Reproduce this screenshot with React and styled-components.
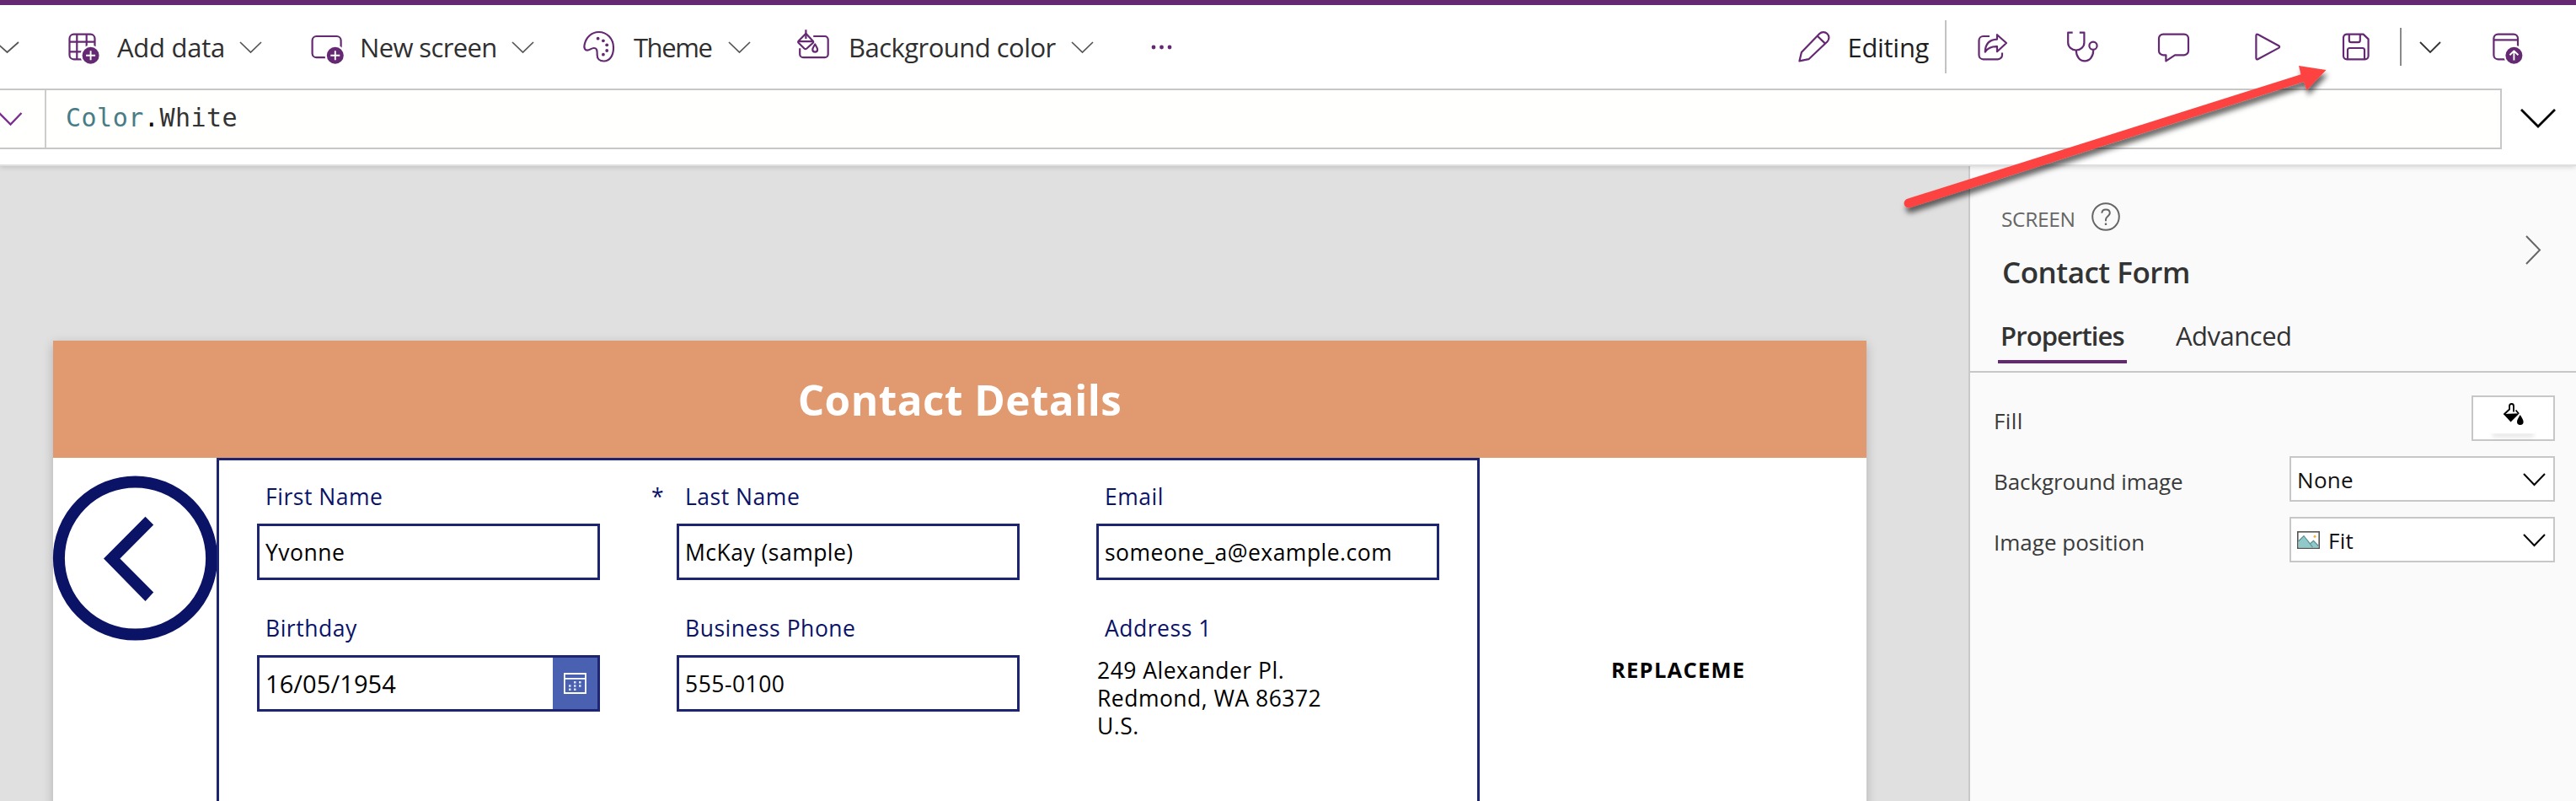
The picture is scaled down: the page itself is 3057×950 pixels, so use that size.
import React from "react";
import styled, { createGlobalStyle } from "styled-components";

const purple = "#652873";
const navy = "#0b1367";
const line = "#c7c7c7";

const GlobalStyle = createGlobalStyle`
  * { box-sizing: border-box; }
  html, body { margin: 0; padding: 0; }
  body { font-family: "Open Sans", "Noto Sans", sans-serif; overflow: hidden; }
  svg { display: block; flex: none; overflow: visible; }
`;

const Page = styled.div`
  position: relative;
  display: flex;
  flex-direction: column;
  width: 3057px;
  height: 950px;
  overflow: hidden;
  background: #e0e0e0;
`;

const TopArea = styled.header`
  position: relative;
  z-index: 1;
  flex: none;
  height: 197px;
  background: #fff;
  border-top: 6px solid ${purple};
  border-bottom: 2px solid #dfdfdf;
  box-shadow: 0 1px 6px rgba(0, 0, 0, 0.17);
`;

const Toolbar = styled.div`
  display: flex;
  align-items: center;
  justify-content: space-between;
  height: 99px;
`;

const Commands = styled.div`
  display: flex;
  align-items: center;
  gap: 57px;
  margin-left: -6px;
`;

const Command = styled.div`
  display: flex;
  align-items: center;
  gap: 19px;
`;

const CommandLabel = styled.span`
  width: ${(p) => p.$width}px;
  padding-left: ${(p) => p.$indent || 0}px;
  font-size: 31px;
  line-height: 44px;
  letter-spacing: ${(p) => p.$track}px;
  white-space: nowrap;
  color: ${(p) => p.$color || "#2f2f2f"};
`;

const More = styled.div`
  margin-left: 11px;
`;

const RightTools = styled.div`
  display: flex;
  align-items: center;
  padding-right: 60px;
`;

const Divider = styled.div`
  width: 2px;
  height: ${(p) => p.$height}px;
  margin: 0 ${(p) => p.$right}px 0 ${(p) => p.$left}px;
  background: ${(p) => p.$color};
`;

const IconGroup = styled.div`
  display: flex;
  gap: 68px;
`;

const PublishSlot = styled.div`
  margin-left: 60px;
`;

const FormulaRow = styled.div`
  display: flex;
  align-items: center;
  height: 72px;
`;

const FormulaBar = styled.div`
  display: flex;
  width: 2969px;
  height: 72px;
  border: 2px solid ${line};
  border-left: 0;
  background: #fffffd;
`;

const PropertyPicker = styled.div`
  display: flex;
  align-items: center;
  width: 55px;
  border-right: 2px solid #cdcdcd;
`;

const Formula = styled.code`
  padding: 0 0 0 23px;
  font: 30px/66px "DejaVu Sans Mono", monospace;
  letter-spacing: 0.5px;
  color: #333;
`;

const Enum = styled.span`
  color: #487c86;
`;

const Dot = styled.span`
  color: #000;
`;

const Expand = styled.div`
  margin: -3px 0 0 22px;
`;

const Work = styled.div`
  display: flex;
  flex: 1;
  min-height: 0;
`;

const Stage = styled.main`
  flex: 1;
  padding: 207px 0 0 63px;
  overflow: hidden;
`;

const Screen = styled.section`
  width: 2152px;
  height: 700px;
  background: #fff;
  box-shadow: 0 4px 12px rgba(0, 0, 0, 0.22);
`;

const ScreenTitle = styled.h1`
  margin: 0;
  height: 139px;
  padding-top: 1px;
  background: #e1996f;
  color: #fff;
  font-size: 49.5px;
  font-weight: 700;
  line-height: 138px;
  letter-spacing: 0.45px;
  text-align: center;
`;

const ScreenBody = styled.div`
  display: flex;
  height: 561px;
`;

const BackColumn = styled.div`
  width: 194px;
  padding-top: 21px;
`;

const Form = styled.div`
  display: grid;
  grid-template-columns: repeat(3, 498px);
  grid-auto-rows: 156px;
  align-content: start;
  width: 1499px;
  padding: 22px 0 0 45px;
  border: 3px solid #1d2472;
`;

const Field = styled.div`
  width: 407px;
`;

const FieldLabel = styled.div`
  display: flex;
  height: 40px;
  margin: 0 0 13px 10px;
  padding-top: 1px;
  font-size: 26.5px;
  line-height: 40px;
  letter-spacing: 0.52px;
  white-space: nowrap;
  color: ${navy};
`;

const Required = styled.span`
  width: 40px;
  margin-left: -40px;
`;

const TextBox = styled.div`
  display: flex;
  align-items: center;
  justify-content: space-between;
  height: 67px;
  padding-left: 7px;
  border: 3px solid #1d2472;
  font-size: ${(p) => p.$size || 26.5}px;
  letter-spacing: ${(p) => (p.$size ? 0.1 : 0.48)}px;
  white-space: nowrap;
  color: #000;
`;

const DateButton = styled.div`
  display: flex;
  align-items: center;
  justify-content: center;
  width: 53px;
  align-self: stretch;
  background: #4a60b0;
`;

const Address = styled.div`
  margin: -11px 0 0 1px;
  padding-top: 13px;
  font-size: 26.5px;
  line-height: 33px;
  letter-spacing: 0.48px;
  white-space: pre-line;
`;

const Placeholder = styled.div`
  padding: 231px 0 0 156px;
  font-size: 25.5px;
  font-weight: 700;
  line-height: 40px;
  letter-spacing: 1.25px;
  color: #000;
`;

const Panel = styled.aside`
  width: 721px;
  border-left: 2px solid #c9c9c9;
  background: #fafafa;
`;

const PanelHead = styled.div`
  display: flex;
  justify-content: space-between;
  height: 245px;
  padding: 43px 42px 0 33px;
  border-bottom: 2px solid ${line};
`;

const Kind = styled.div`
  display: flex;
  align-items: center;
  height: 34px;
  padding-left: 4px;
  gap: 19px;
`;

const KindText = styled.span`
  padding-top: 5px;
  font-size: 24.5px;
  line-height: 34px;
  letter-spacing: -0.35px;
  color: #666;
`;

const PanelTitle = styled.h2`
  margin: 27px 0 0 5px;
  font-size: 35px;
  font-weight: 600;
  line-height: 44px;
  letter-spacing: -0.49px;
  color: #333;
`;

const Tabs = styled.div`
  display: flex;
  gap: 58px;
  margin-top: 33px;
`;

const Tab = styled.div`
  height: 53px;
  width: ${(p) => (p.$active ? 153 : 140)}px;
  padding-left: ${(p) => (p.$active ? 3 : 0)}px;
  border-bottom: 4px solid ${(p) => (p.$active ? purple : "transparent")};
  font-size: 31px;
  font-weight: ${(p) => (p.$active ? 600 : 400)};
  line-height: 40px;
  letter-spacing: ${(p) => (p.$active ? -0.9 : -0.5)}px;
  white-space: nowrap;
  color: #333;
`;

const CollapseSlot = styled.div`
  padding-top: 39px;
`;

const Properties = styled.div`
  display: flex;
  flex-direction: column;
  gap: 18px;
  padding: 27px 25px 0 27px;
`;

const PropertyRow = styled.div`
  display: flex;
  align-items: center;
  justify-content: space-between;
  height: 54px;
`;

const PropertyName = styled.span`
  padding: 6px 0 0 1px;
  font-size: 26px;
  line-height: 36px;
  letter-spacing: ${(p) => p.$track || 0}px;
  color: #3a3a3a;
`;

const FillButton = styled.div`
  display: flex;
  flex-direction: column;
  align-items: center;
  width: 99px;
  height: 54px;
  padding-top: 7px;
  border: 2px solid ${line};
  background: #fff;
`;

const Swatch = styled.div`
  width: 51px;
  height: 6px;
  margin-top: 4px;
  background: #fff;
  box-shadow: 0 5px 5px -1px rgba(0, 0, 0, 0.13);
`;

const Select = styled.div`
  display: flex;
  align-items: center;
  width: 315px;
  height: 54px;
  padding: 1px 9px 0 7px;
  border: 2px solid ${line};
  background: #fff;
  font-size: 26px;
  letter-spacing: 0.3px;
  color: #111;
`;

const SelectText = styled.span`
  flex: 1;
  padding-left: ${(p) => (p.$afterIcon ? 10 : 0)}px;
  line-height: 36px;
`;

const Annotation = styled.svg`
  position: absolute;
  z-index: 2;
  left: 0;
  top: 0;
  pointer-events: none;
`;

const Chevron = ({ w = 27, h = 14, color = "#555", stroke = 1.7 }) => (
  <svg width={w} height={h} fill="none" stroke={color} strokeWidth={stroke}>
    <path d={`M1 1 L${w / 2} ${h - 1} L${w - 1} 1`} />
  </svg>
);

const Icon = ({ children, shift = 0 }) => (
  <svg width="40" height="40" viewBox="0 0 40 40" fill="none" stroke={purple} strokeWidth="2.2" strokeLinejoin="round">
    <g transform={`translate(${shift} 0)`}>{children}</g>
  </svg>
);

const PlusBadge = ({ x }) => (
  <g>
    <circle cx={x} cy="29.7" r="12.2" fill="#fff" stroke="none" />
    <circle cx={x} cy="29.7" r="10" fill={purple} stroke="none" />
    <path d={`M${x - 5.5} 29.7h11M${x} 24.2v11`} stroke="#fff" strokeWidth="1.9" />
  </g>
);

const AddDataIcon = () => (
  <Icon>
    <rect x="2.5" y="4.7" width="30" height="29.6" rx="5" />
    <path d="M11.3 4.7v29.6M22.7 4.7v29.6M2.5 13.7h30M2.5 25.3h30" />
    <PlusBadge x={27.6} />
  </Icon>
);

const NewScreenIcon = () => (
  <Icon>
    <rect x="2.6" y="7" width="34" height="25.2" rx="5" />
    <PlusBadge x={29.8} />
  </Icon>
);

const ThemeIcon = () => (
  <Icon>
    <path d="M2.6 17C4.4 8.5 11 2 19.5 2C29.5 2 37 10 37 20.5C37 29.5 33 36.5 25.5 36.5C20.5 36.5 17.7 33.5 17.7 29.5C17.7 24 17.6 21 13.8 21C10.5 21 9 23.7 6 23.7C3 23.7 1.8 20.6 2.6 17Z" />
    <g fill={purple} stroke="none">
      <circle cx="18.6" cy="9.7" r="1.9" />
      <circle cx="24.9" cy="12.3" r="1.9" />
      <circle cx="29.2" cy="17.3" r="1.9" />
      <circle cx="29.2" cy="24" r="1.9" />
      <circle cx="24.9" cy="28.7" r="1.9" />
    </g>
  </Icon>
);

const BackgroundIcon = () => (
  <Icon shift={-0.8}>
    <path d="M18 7h13.5a4 4 0 0 1 4 4v17.2a4 4 0 0 1-4 4H6a4 4 0 0 1-4-4v-7" />
    <path d="M9.2 3.7L17.4 12.4Q18.6 13.7 17.4 15L10.2 21.5Q8.6 22.8 7.2 21.5L.6 15Q-.6 13.7.6 12.4Z" />
    <path d="M9.2 -.7V10M0 13.2h18" />
    <path d="M20 16.5c-1.6 2.8-2.9 4.4-2.9 6.2a2.9 2.9 0 0 0 5.8 0c0-1.8-1.3-3.4-2.9-6.2z" />
  </Icon>
);

const PencilIcon = () => (
  <Icon shift={1}>
    <path d="M2.4 36.4L4.9 26L26.2 4.1A6.3 6.3 0 0 1 35.6 13.2L13.4 34.2Z" />
    <path d="M23.8 6.8L33 15.6" />
  </Icon>
);

const ShareIcon = () => (
  <Icon shift={1}>
    <path d="M16 7H8.5a5 5 0 0 0-5 5v17.3a5 5 0 0 0 5 5H26a5 5 0 0 0 5-5V26.5" />
    <path d="M25 5.2L36 15L25 25.2V19.2C18 19 14 21 10.8 25.6C11 16.5 15 11 25 10.6Z" />
  </Icon>
);

const CheckerIcon = () => (
  <Icon shift={-1}>
    <path d="M8.7 2.6H3.2V14.5a9.6 9 0 0 0 19.2 0V2.6H16.8" />
    <path d="M12.8 23.5C12.8 31 17 36.3 23 36.3S33.2 31 33.2 23.8" />
    <circle cx="33" cy="18.3" r="4.6" />
  </Icon>
);

const CommentIcon = () => (
  <Icon>
    <path d="M7 4.6H32a5 5 0 0 1 5 5V24.3a5 5 0 0 1-5 5H21L10.4 36.3V29.3H7a5 5 0 0 1-5-5V9.6a5 5 0 0 1 5-5Z" />
  </Icon>
);

const PlayIcon = () => (
  <Icon shift={6}>
    <path d="M3.4 6.4Q3.4 3.9 5.8 5L30.2 18.2Q32 19.5 30.2 20.9L5.8 34Q3.4 35.2 3.4 32.7Z" />
  </Icon>
);

const SaveIcon = () => (
  <Icon shift={1}>
    <path d="M7.8 4.6H27.6L33.6 10.4V30.3a4 4 0 0 1-4 4H8a4 4 0 0 1-4-4V8.6a4 4 0 0 1 4-4Z" />
    <path d="M10.8 4.6V11.8q0 2.4 2.4 2.4H21.4q2.4 0 2.4-2.4V4.6" />
    <path d="M9 34V23.4q0-2.4 2.4-2.4H26.6q2.4 0 2.4 2.4V34" />
  </Icon>
);

const PublishIcon = () => (
  <Icon>
    <rect x="2.4" y="4.6" width="28.6" height="29.7" rx="5" />
    <path d="M2.4 11.4h28.6" />
    <circle cx="26.4" cy="29.7" r="12.2" fill="#fff" stroke="none" />
    <circle cx="26.4" cy="29.7" r="10" fill={purple} stroke="none" />
    <path d="M26.4 35.5V24.6M21.4 29.3L26.4 24.4L31.4 29.3" stroke="#fff" strokeWidth="1.9" />
  </Icon>
);

const BackIcon = () => (
  <svg width="195" height="196" viewBox="0 0 195 196">
    <circle cx="97.5" cy="98" r="90.6" fill="none" stroke={navy} strokeWidth="14" />
    <path d="M109.5 48.8L119.2 58.4L79.4 98.5L119.2 138.6L109.5 149L60 98.5Z" fill={navy} />
  </svg>
);

const CalendarIcon = () => (
  <svg width="27" height="25" viewBox="0 0 27 25">
    <path d="M.9 1H26V24H.9ZM.9 6.8H26" fill="none" stroke="#fff" strokeWidth="1.8" />
    <path
      d="M12 10h2.5v2.5H12zM18 10h2.5v2.5H18zM6 14.3h2.5v2.5H6zM12 14.3h2.5v2.5H12zM18 14.3h2.5v2.5H18zM6 18.5h2.5V21H6zM12 18.5h2.5V21H12z"
      fill="#dfe4f5"
    />
  </svg>
);

const HelpIcon = () => (
  <svg width="34" height="34" viewBox="0 0 34 34" fill="none" stroke="#666" strokeWidth="2">
    <circle cx="17" cy="17" r="15.8" />
    <path d="M12.3 12.8C12.5 10 14.3 8.4 17 8.4C19.8 8.4 21.8 10 21.8 12.6C21.8 16.3 17 16.6 17 20.3V22.3" />
    <path d="M17 24.6v2.4" strokeWidth="2.3" />
  </svg>
);

const PaintIcon = () => (
  <svg width="26" height="26" viewBox="0 0 26 26">
    <path d="M1.5 13.5L8 7.5V3.5Q8 1 10.5 1T13 3.5V10.5M15.5 8.5L19 12.5" fill="none" stroke="#000" strokeWidth="1.8" />
    <path d="M.8 13L19.8 12.3L9.6 22.6Z" />
    <path d="M20.7 14C18.5 17.8 17 20 17 22.2a3.8 3.8 0 0 0 7.6 0C24.6 20 23 17.8 20.7 14Z" />
  </svg>
);

const PictureIcon = () => (
  <svg width="27" height="21" viewBox="0 0 27 21">
    <rect x=".8" y=".8" width="25.4" height="19.4" fill="#fff" stroke="#555" strokeWidth="1.6" />
    <path d="M1.6 12L8 5.5L16 14.5L19.5 11.3L25.4 17.5V19.4H1.6Z" fill="#8fc9ca" />
    <path d="M1.6 12L8 5.5L18.5 19M15.8 14.5L19.5 11.3L25.4 17.5" fill="none" stroke="#5a8d8d" strokeWidth="1.1" />
    <circle cx="21" cy="6.2" r="1.5" fill="#f0b340" />
  </svg>
);

const commands = [
  { name: "Add data", width: 126, track: -0.27, Glyph: AddDataIcon },
  { name: "New screen", width: 161, track: -0.63, Glyph: NewScreenIcon },
  { name: "Theme", width: 95, track: -1.45, indent: 2, Glyph: ThemeIcon },
  { name: "Background color", width: 245, track: -0.53, Glyph: BackgroundIcon },
];

const fields = [
  { label: "First Name", value: "Yvonne" },
  { label: "Last Name", value: "McKay (sample)", required: true },
  { label: "Email", value: "someone_a@example.com" },
  { label: "Birthday", value: "16/05/1954", date: true },
  { label: "Business Phone", value: "555-0100" },
];

export default function App() {
  return (
    <>
      <GlobalStyle />
      <Page>
        <TopArea>
          <Toolbar>
            <Commands>
              <Chevron w={29} />
              {commands.map(({ name, width, track, indent, Glyph }) => (
                <Command key={name}>
                  <Glyph />
                  <CommandLabel $width={width} $track={track} $indent={indent}>{name}</CommandLabel>
                  <Chevron />
                </Command>
              ))}
              <More>
                <svg width="26" height="6" fill={purple}>
                  <circle cx="3" cy="3" r="2.4" />
                  <circle cx="12.5" cy="3" r="2.4" />
                  <circle cx="22" cy="3" r="2.4" />
                </svg>
              </More>
            </Commands>
            <RightTools>
              <Command>
                <PencilIcon />
                <CommandLabel $width={97} $track={-0.3} $indent={1.5} $color="#1f1f1f">Editing</CommandLabel>
              </Command>
              <Divider $height={63} $left={20} $right={34} $color="#c2c2c2" />
              <IconGroup>
                <ShareIcon />
                <CheckerIcon />
                <CommentIcon />
                <PlayIcon />
                <SaveIcon />
              </IconGroup>
              <Divider $height={45} $left={32} $right={21} $color="#8a8a8a" />
              <Chevron w={26} color="#333" stroke={1.8} />
              <PublishSlot><PublishIcon /></PublishSlot>
            </RightTools>
          </Toolbar>
          <FormulaRow>
            <FormulaBar>
              <PropertyPicker>
                <svg width="27" height="16" fill="none" stroke="#7b2f8e" strokeWidth="2.4">
                  <path d="M-1 1L12.5 14.5L25.5 1" />
                </svg>
              </PropertyPicker>
              <Formula><Enum>Color</Enum><Dot>.</Dot>White</Formula>
            </FormulaBar>
            <Expand><Chevron w={42} h={22} color="#000" stroke={2.8} /></Expand>
          </FormulaRow>
        </TopArea>
        <Work>
          <Stage>
            <Screen>
              <ScreenTitle>Contact Details</ScreenTitle>
              <ScreenBody>
                <BackColumn><BackIcon /></BackColumn>
                <Form>
                  {fields.map((f) => (
                    <Field key={f.label}>
                      <FieldLabel>
                        {f.required && <Required>*</Required>}
                        {f.label}
                      </FieldLabel>
                      <TextBox $size={f.date ? 29 : undefined}>
                        <span>{f.value}</span>
                        {f.date && <DateButton><CalendarIcon /></DateButton>}
                      </TextBox>
                    </Field>
                  ))}
                  <Field>
                    <FieldLabel>Address 1</FieldLabel>
                    <Address>{"249 Alexander Pl.\nRedmond, WA 86372\nU.S."}</Address>
                  </Field>
                </Form>
                <Placeholder>REPLACEME</Placeholder>
              </ScreenBody>
            </Screen>
          </Stage>
          <Panel>
            <PanelHead>
              <div>
                <Kind>
                  <KindText>SCREEN</KindText>
                  <HelpIcon />
                </Kind>
                <PanelTitle>Contact Form</PanelTitle>
                <Tabs>
                  <Tab $active>Properties</Tab>
                  <Tab>Advanced</Tab>
                </Tabs>
              </div>
              <CollapseSlot>
                <svg width="18" height="35" fill="none" stroke="#666" strokeWidth="2">
                  <path d="M1 1L17 17.5L1 34" />
                </svg>
              </CollapseSlot>
            </PanelHead>
            <Properties>
              <PropertyRow>
                <PropertyName $track={0.4}>Fill</PropertyName>
                <FillButton><PaintIcon /><Swatch /></FillButton>
              </PropertyRow>
              <PropertyRow>
                <PropertyName $track={-0.1}>Background image</PropertyName>
                <Select>
                  <SelectText>None</SelectText>
                  <Chevron w={27} h={15} color="#000" stroke={2} />
                </Select>
              </PropertyRow>
              <PropertyRow>
                <PropertyName>Image position</PropertyName>
                <Select>
                  <PictureIcon />
                  <SelectText $afterIcon>Fit</SelectText>
                  <Chevron w={27} h={15} color="#000" stroke={2} />
                </Select>
              </PropertyRow>
            </Properties>
          </Panel>
        </Work>
        <Annotation width="3057" height="950" viewBox="0 0 3057 950">
          <defs>
            <filter id="soft" x="-10%" y="-20%" width="120%" height="150%">
              <feDropShadow dx="2" dy="6" stdDeviation="3" floodColor="#000" floodOpacity="0.6" />
            </filter>
          </defs>
          <path
            d="M2263.5 235.8L2730.5 88.2L2728 78L2760.5 83L2737.5 107L2734 97L2266.5 246.3A5.4 5.4 0 0 1 2263.5 235.8Z"
            fill="#fd4343"
            filter="url(#soft)"
          />
        </Annotation>
      </Page>
    </>
  );
}
